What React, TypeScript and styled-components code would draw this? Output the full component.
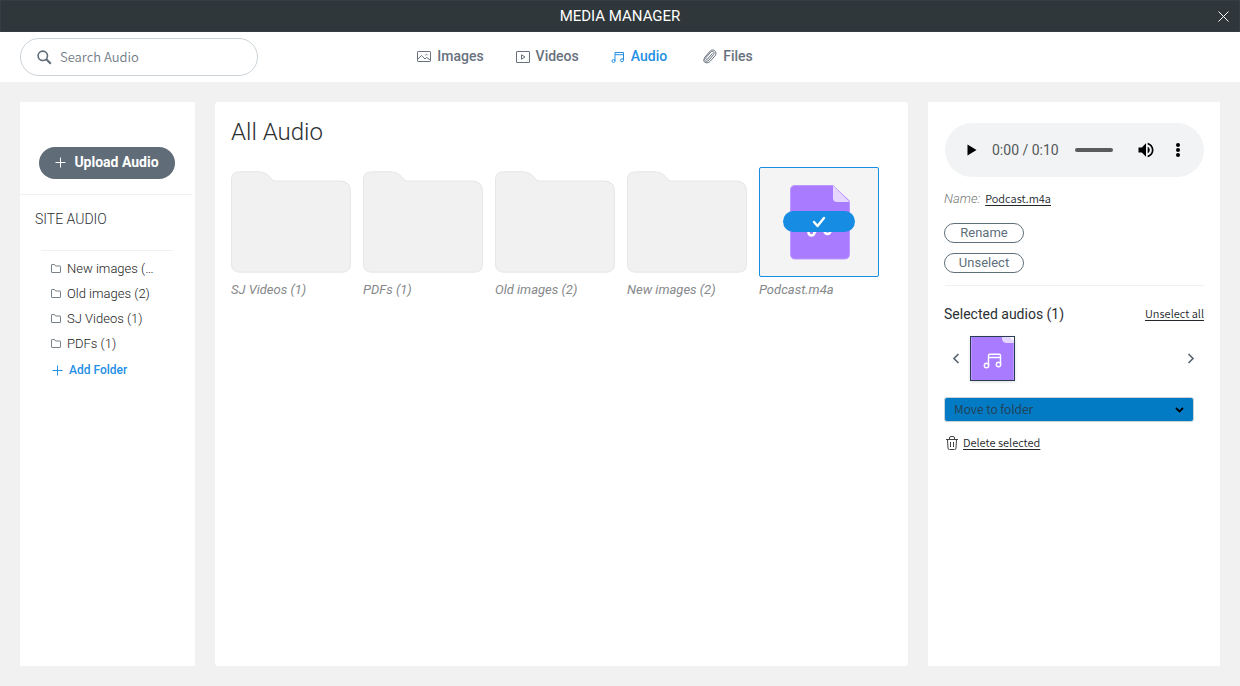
import React from "react";
import styled, { createGlobalStyle, css } from "styled-components";

const roboto = `Roboto, "Liberation Sans", sans-serif`;
const source = `"Noto Sans CJK SC", "Noto Sans", sans-serif`;

const GlobalStyle = createGlobalStyle`
  *, *::before, *::after { box-sizing: border-box; }
  body { margin: 0; font-family: ${roboto}; color: #2b2f33; background: #f1f1f1; }
  button { font: inherit; color: inherit; background: none; border: 0; padding: 0; cursor: pointer; }
  h1, h2, h3, p, ul, figure { margin: 0; padding: 0; font-weight: 400; }
  ul { list-style: none; }
  svg { display: block; flex: none; }
`;

const Page = styled.div`
  display: flex;
  flex-direction: column;
  min-height: 100vh;
`;

const TitleBar = styled.header`
  display: grid;
  grid-template-columns: 1fr auto 1fr;
  align-items: center;
  height: 32px;
  padding: 0 10px;
  background: #2f373b;
  border: 1px solid #353e42;
  color: #fff;
`;

const AppTitle = styled.h1`
  grid-column: 2;
  font-size: 15px;
  line-height: 20px;
`;

const CloseButton = styled.button`
  justify-self: end;
`;

const Toolbar = styled.div`
  display: grid;
  grid-template-columns: 238px 1fr 308px;
  align-items: center;
  height: 50px;
  padding: 0 20px;
  background: #fff;
`;

const SearchBox = styled.label`
  display: flex;
  align-items: center;
  gap: 8px;
  height: 38px;
  padding: 0 16px;
  border: 1px solid #ccd3d8;
  border-radius: 19px;
  color: #5f6b77;
`;

const SearchInput = styled.input`
  flex: 1;
  min-width: 0;
  border: 0;
  padding: 0;
  outline: 0;
  background: none;
  font: 350 13px/20px ${source};
  color: #2b2f33;
  &::placeholder { color: #727c87; opacity: 1; }
`;

const Tabs = styled.nav`
  display: flex;
  justify-content: center;
  gap: 32px;
  padding-bottom: 2px;
`;

const Tab = styled.a<{ $active?: boolean }>`
  display: flex;
  align-items: center;
  gap: 6px;
  font-size: 14px;
  font-weight: 500;
  line-height: 20px;
  text-decoration: none;
  color: ${(p) => (p.$active ? "#2490e4" : "#67717d")};
`;

const Workspace = styled.main`
  flex: 1;
  display: grid;
  grid-template-columns: 175px minmax(0, 1fr) 292px;
  gap: 20px;
  padding: 20px;
`;

const Sidebar = styled.aside`
  background: #fff;
`;

const UploadArea = styled.div`
  display: flex;
  justify-content: center;
  padding: 45px 0 15px;
  margin-right: 2px;
  border-bottom: 1px solid #f1f1f1;
`;

const UploadButton = styled.button`
  display: flex;
  align-items: center;
  justify-content: center;
  gap: 8px;
  width: 136px;
  height: 32px;
  padding: 0 0 2px 1px;
  border-radius: 16px;
  background: #606c78;
  color: #fff;
  font-size: 14px;
  font-weight: 700;
`;

const SidebarTitle = styled.h2`
  padding: 14px 15px;
  font-size: 14px;
  font-weight: 300;
  line-height: 20px;
`;

const FolderTree = styled.div`
  margin: 7px 22px 0 21px;
  padding: 5px 18px 0 10px;
  border-top: 1px solid #f1f1f1;
`;

const TreeItem = styled.a`
  display: flex;
  align-items: center;
  gap: 6px;
  height: 25px;
  font-size: 13px;
  font-weight: 300;
  line-height: 20px;
  color: #222;
  text-decoration: none;
`;

const TreeLabel = styled.span`
  overflow: hidden;
  text-overflow: ellipsis;
  white-space: nowrap;
`;

const AddFolderButton = styled.button`
  display: flex;
  align-items: center;
  gap: 6px;
  height: 28px;
  padding-left: 1px;
  font-size: 12px;
  font-weight: 500;
  color: #2490e4;
`;

const Library = styled.section`
  padding: 15px 16px;
  border-radius: 3px;
  background: #fff;
`;

const LibraryTitle = styled.h2`
  font-size: 24px;
  font-weight: 300;
  line-height: 30px;
`;

const Gallery = styled.ul`
  display: flex;
  flex-wrap: wrap;
  gap: 20px 12px;
  margin-top: 20px;
`;

const GalleryItem = styled.li`
  width: 120px;
`;

const thumb = css`
  display: flex;
  align-items: center;
  justify-content: center;
  width: 120px;
  height: 110px;
`;

const FolderThumb = styled.button`
  ${thumb}
`;

const FileThumb = styled.button`
  ${thumb}
  position: relative;
  border: 1px solid #168de2;
  border-radius: 2px;
  background: #f4f4f4;
`;

const SelectedBadge = styled.span`
  position: absolute;
  top: 43px;
  left: 23px;
  display: flex;
  align-items: center;
  justify-content: center;
  width: 72px;
  height: 21px;
  border-radius: 11px;
  background: #168de2;
  color: #fff;
`;

const Caption = styled.p`
  margin-top: 3px;
  font-size: 13px;
  font-style: italic;
  line-height: 20px;
  color: #85888b;
`;

const Details = styled.aside`
  padding: 21px 16px;
  background: #fff;
`;

const Player = styled.div`
  display: flex;
  align-items: center;
  height: 54px;
  margin-left: 1px;
  padding: 0 16px;
  border-radius: 27px;
  background: #f1f3f4;
  color: #000;
`;

const PlayTime = styled.span`
  margin: 0 16px 0 11px;
  font-size: 14px;
  line-height: 20px;
  color: #55585b;
  white-space: nowrap;
`;

const SeekBar = styled.input`
  appearance: none;
  flex: 1;
  min-width: 0;
  height: 4px;
  margin: 0 23px 0 0;
  border-radius: 2px;
  background: #5a5c5b;
  &::-webkit-slider-thumb { appearance: none; width: 0; height: 0; }
`;

const PlayerButton = styled.button`
  & + & { margin-left: 12px; }
`;

const NameRow = styled.p`
  display: flex;
  align-items: center;
  gap: 5px;
  margin-top: 12px;
  font-size: 13px;
  line-height: 20px;
`;

const NameLabel = styled.span`
  font-style: italic;
  font-weight: 300;
  color: #777;
`;

const TextLink = styled.a`
  padding-bottom: 2px;
  font: 350 11px/18px ${source};
  color: #23272b;
  text-decoration: underline;
  text-underline-offset: 2px;
`;

const Actions = styled.div`
  display: flex;
  flex-direction: column;
  gap: 10px;
  margin-top: 14px;
  padding-bottom: 12px;
`;

const OutlineButton = styled.button`
  width: 80px;
  height: 20px;
  border: 1px solid #60707a;
  border-radius: 10px;
  font-size: 13px;
  line-height: 18px;
  color: #60707a;
`;

const SelectionHeader = styled.div`
  display: flex;
  align-items: center;
  justify-content: space-between;
  margin-left: 1px;
  padding-top: 18px;
  border-top: 1px solid #f1f1f1;
`;

const SelectionTitle = styled.h3`
  margin-left: -1px;
  font-size: 14px;
  line-height: 20px;
`;

const Carousel = styled.div`
  display: flex;
  align-items: center;
  gap: 8px;
  margin-top: 12px;
  padding: 0 8px 0 6px;
  color: #56616c;
`;

const CarouselTrack = styled.div`
  flex: 1;
  display: flex;
`;

const CarouselThumb = styled.button`
  width: 45px;
  height: 45px;
  border: 1px solid #283c52;
  background: #a97bff;
  box-shadow: 0 1px 3px #0002;
`;

const MoveField = styled.div`
  display: grid;
  align-items: center;
  height: 25px;
  margin: 16px 10px 0 0;
  border: 1px solid #ccd3d8;
  border-radius: 3px;
  background: #027bc4;
  color: #000;
`;

const MoveSelect = styled.select`
  grid-area: 1 / 1;
  appearance: none;
  width: 100%;
  height: 22px;
  padding: 0 9px 1px;
  border: 0;
  background: none;
  font: 350 12px/20px ${source};
  color: #283a4b;
`;

const MoveChevron = styled.span`
  grid-area: 1 / 1;
  justify-self: end;
  padding-right: 9px;
  pointer-events: none;
`;

const DeleteRow = styled.div`
  display: flex;
  align-items: center;
  gap: 5px;
  margin-top: 11px;
  padding-left: 2px;
`;

const ImageIcon = () => (
  <svg width="14" height="14" viewBox="0 0 14 14" fill="none" stroke="currentColor">
    <rect x="0.5" y="2.5" width="13" height="10" rx="0.6" />
    <path d="M1 10l3.5-3.6L8 10l1.6-1.5 3.6 2.4" />
    <path d="M8.3 6.4c.2-1.4 2-1.4 2.2 0" strokeWidth="0.8" />
  </svg>
);

const VideoIcon = () => (
  <svg width="14" height="14" viewBox="0 0 14 14" fill="none" stroke="currentColor">
    <rect x="0.5" y="2.5" width="13" height="11" rx="0.4" />
    <path d="M5.5 5.800v4.400L9 8z" />
  </svg>
);

const NoteIcon = () => (
  <svg width="14" height="14" viewBox="0 0 14 14" fill="none" stroke="currentColor">
    <path d="M4 12V3.500h8.500V11M4 5.700h8.500" />
    <circle cx="2.500" cy="12" r="1.500" />
    <circle cx="11" cy="11.300" r="1.500" />
  </svg>
);

const ClipIcon = () => (
  <svg width="18" height="16" viewBox="0 0 18 16" fill="none" stroke="currentColor" strokeLinecap="round">
    <path d="M13.200 5.800L8.700 11C7.600 12.200 6 10.800 7 9.500L11.800 4C13.700 2 16.200 4.300 14.600 6.500L10 12C7.200 15 3.700 12 6 9L11.300 2.900C14 .2 18.600 3.800 16.400 7.300L11.200 13.300C8.700 15.800 4.800 15.200 4.500 12" />
  </svg>
);

const SearchIcon = () => (
  <svg width="15" height="15" viewBox="0 0 15 15" fill="none" stroke="currentColor">
    <circle cx="5.8" cy="5.8" r="4.7" strokeWidth="1.6" />
    <path d="M9.3 9.3l4.5 4.5" strokeWidth="2" />
  </svg>
);

const CloseIcon = () => (
  <svg width="11" height="11" viewBox="0 0 11 11" stroke="currentColor">
    <path d="M.5.5l10 10M10.5.5l-10 10" />
  </svg>
);

const PlusIcon = () => (
  <svg width="11" height="11" viewBox="0 0 11 11" stroke="currentColor">
    <path d="M5.5 .5v10M.5 5.5h10" />
  </svg>
);

const SmallFolderIcon = () => (
  <svg width="10" height="10" viewBox="0 0 10 10" fill="none" stroke="#77818b">
    <path d="M.5 8V1q0-.5.5-.5h2.5l1 1.500H9q.5 0 .5.5V8q0 .5-.5.5H1q-.5 0-.5-.5z" />
  </svg>
);

const LargeFolder = () => (
  <svg width="120" height="102" viewBox="0 0 120 102" fill="#f1f1f1" stroke="#e6e6e6">
    <path d="M.5 93V9Q.5 .8 8.500 .8H27C34 .8 38 4.500 41 8.500Q42 10 44 10H110Q119.500 11 119.500 20V93Q119.500 101.200 111 101.200H9Q.5 101.200 .5 93Z" />
  </svg>
);

const AudioFileArt = () => (
  <svg width="62" height="76" viewBox="-2 -1 62 76" fill="none">
    <path d="M5 .5H43L59.500 16V69Q59.500 74 54.500 74H5Q.5 74 .5 69V5Q.5 .5 5 .5Z" fill="#a97bff" stroke="#bd98ff" />
    <path d="M43 .5L59.500 17H47Q43 17 43 13Z" fill="#e5d7ff" />
    <path d="M25 48V34H41V46" stroke="#fff" strokeWidth="2.500" />
    <circle cx="21.500" cy="47.500" r="3" stroke="#fff" strokeWidth="2.500" />
    <circle cx="37.500" cy="46" r="3" stroke="#fff" strokeWidth="2.500" />
  </svg>
);

const AudioThumbArt = () => (
  <svg width="43" height="43" viewBox="0 0 43 43" fill="none">
    <path d="M31 0H43V6H36Q31 6 31 1Z" fill="#e5d7ff" />
    <path d="M39 0h4v4z" fill="#fff" />
    <path d="M.5 0V43M42.500 6V43" stroke="#bd98ff" />
    <path d="M17.500 29V18.500Q17.500 17.200 18.800 17.200H28.200Q29.500 17.200 29.500 18.500V27.500M17.500 20.500H29.500" stroke="#fff" strokeWidth="1.400" />
    <circle cx="15.500" cy="28.500" r="2.200" stroke="#fff" strokeWidth="1.400" />
    <circle cx="27.500" cy="27.500" r="2.200" stroke="#fff" strokeWidth="1.400" />
  </svg>
);

const CheckIcon = () => (
  <svg width="14" height="12" viewBox="0 0 14 12" fill="none" stroke="currentColor" strokeWidth="2.400" strokeLinecap="round" strokeLinejoin="round">
    <path d="M2 6l3.500 4L12 2" />
  </svg>
);

const PlayIcon = () => (
  <svg width="20" height="20" viewBox="0 0 20 20" fill="currentColor">
    <path d="M6.500 4.500v11l9-5.500z" />
  </svg>
);

const VolumeIcon = () => (
  <svg width="20" height="20" viewBox="0 0 24 24" fill="currentColor">
    <path d="M3 9v6h4l5 5V4L7 9H3zm13.500 3c0-1.770-1.020-3.290-2.500-4.030v8.050c1.480-.730 2.500-2.250 2.500-4.020zM14 3.230v2.060c2.890.860 5 3.540 5 6.710s-2.110 5.850-5 6.710v2.060c4.010-.910 7-4.490 7-8.770s-2.990-7.860-7-8.770z" />
  </svg>
);

const MoreIcon = () => (
  <svg width="20" height="20" viewBox="0 0 20 20" fill="currentColor">
    <circle cx="10" cy="5" r="2" />
    <circle cx="10" cy="10" r="2" />
    <circle cx="10" cy="15" r="2" />
  </svg>
);

const Arrow = ({ d }: { d: string }) => (
  <svg width="12" height="12" viewBox="0 0 12 12" fill="none" stroke="currentColor" strokeWidth="1.600">
    <path d={d} />
  </svg>
);

const DownIcon = () => (
  <svg width="9" height="6" viewBox="0 0 9 6" fill="none" stroke="currentColor" strokeWidth="1.800">
    <path d="M1 1l3.500 3.400L8 1" />
  </svg>
);

const TrashIcon = () => (
  <svg width="12" height="14" viewBox="0 0 12 14" fill="none" stroke="#444">
    <path d="M0 3.500h12M3.500 3V2q0-1.500 1.500-1.500h2q1.500 0 1.500 1.500V3M1.500 4l.5 8q0 1.500 1.500 1.500h5q1.500 0 1.500-1.500l.5-8M4.500 6v5M7.500 6v5" />
  </svg>
);

const tabs = [
  { label: "Images", icon: <ImageIcon /> },
  { label: "Videos", icon: <VideoIcon /> },
  { label: "Audio", icon: <NoteIcon />, active: true },
  { label: "Files", icon: <ClipIcon /> },
];

const tree = ["New images (2)", "Old images (2)", "SJ Videos (1)", "PDFs (1)"];
const folders = ["SJ Videos (1)", "PDFs (1)", "Old images (2)", "New images (2)"];

export default function App() {
  return (
    <Page>
      <GlobalStyle />
      <TitleBar>
        <AppTitle>MEDIA MANAGER</AppTitle>
        <CloseButton aria-label="Close"><CloseIcon /></CloseButton>
      </TitleBar>
      <Toolbar>
        <SearchBox>
          <SearchIcon />
          <SearchInput type="text" aria-label="Search Audio" placeholder="Search Audio" />
        </SearchBox>
        <Tabs>
          {tabs.map((t) => (
            <Tab key={t.label} href="#" $active={t.active}>{t.icon}{t.label}</Tab>
          ))}
        </Tabs>
      </Toolbar>
      <Workspace>
        <Sidebar>
          <UploadArea>
            <UploadButton><PlusIcon />Upload Audio</UploadButton>
          </UploadArea>
          <SidebarTitle>SITE AUDIO</SidebarTitle>
          <FolderTree>
            <ul>
              {tree.map((name) => (
                <li key={name}>
                  <TreeItem href="#"><SmallFolderIcon /><TreeLabel>{name}</TreeLabel></TreeItem>
                </li>
              ))}
            </ul>
            <AddFolderButton><PlusIcon />Add Folder</AddFolderButton>
          </FolderTree>
        </Sidebar>
        <Library>
          <LibraryTitle>All Audio</LibraryTitle>
          <Gallery>
            {folders.map((name) => (
              <GalleryItem key={name}>
                <FolderThumb aria-label={name}><LargeFolder /></FolderThumb>
                <Caption>{name}</Caption>
              </GalleryItem>
            ))}
            <GalleryItem>
              <FileThumb aria-label="Podcast.m4a">
                <AudioFileArt />
                <SelectedBadge><CheckIcon /></SelectedBadge>
              </FileThumb>
              <Caption>Podcast.m4a</Caption>
            </GalleryItem>
          </Gallery>
        </Library>
        <Details>
          <Player>
            <PlayerButton aria-label="Play"><PlayIcon /></PlayerButton>
            <PlayTime>0:00 / 0:10</PlayTime>
            <SeekBar type="range" aria-label="Seek" min={0} max={10} defaultValue={0} />
            <PlayerButton aria-label="Mute"><VolumeIcon /></PlayerButton>
            <PlayerButton aria-label="More options"><MoreIcon /></PlayerButton>
          </Player>
          <NameRow>
            <NameLabel>Name:</NameLabel>
            <TextLink href="#">Podcast.m4a</TextLink>
          </NameRow>
          <Actions>
            <OutlineButton>Rename</OutlineButton>
            <OutlineButton>Unselect</OutlineButton>
          </Actions>
          <SelectionHeader>
            <SelectionTitle>Selected audios (1)</SelectionTitle>
            <TextLink href="#">Unselect all</TextLink>
          </SelectionHeader>
          <Carousel>
            <button aria-label="Previous"><Arrow d="M8.500 1L4 5.500 8.500 10" /></button>
            <CarouselTrack>
              <CarouselThumb aria-label="Podcast.m4a"><AudioThumbArt /></CarouselThumb>
            </CarouselTrack>
            <button aria-label="Next"><Arrow d="M4.500 1L9 5.500 4.500 10" /></button>
          </Carousel>
          <MoveField>
            <MoveSelect aria-label="Move to folder">
              <option>Move to folder</option>
            </MoveSelect>
            <MoveChevron><DownIcon /></MoveChevron>
          </MoveField>
          <DeleteRow>
            <TrashIcon />
            <TextLink href="#">Delete selected</TextLink>
          </DeleteRow>
        </Details>
      </Workspace>
    </Page>
  );
}
